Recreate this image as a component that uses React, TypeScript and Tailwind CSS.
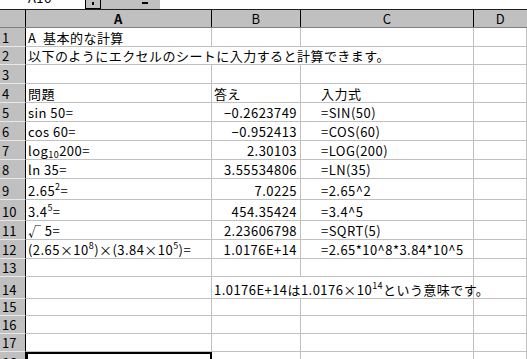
import React from "react";

const FONT = "font-['Noto_Sans_CJK_JP','Noto_Sans_CJK_SC',sans-serif]";
const CELL =
  "flex items-end border-r border-b border-[#c0c0c0] px-[2px] pb-[1px] leading-[15px] whitespace-nowrap";

type Row = {
  n: number;
  h: string;
  a?: React.ReactNode;
  b?: React.ReactNode;
  c?: React.ReactNode;
  span?: "abc" | "bc";
  bLeft?: boolean;
};

const Sup = ({ children }: { children: React.ReactNode }) => (
  <sup className="text-[9px] top-[-6px]">{children}</sup>
);

const rows: Row[] = [
  { n: 1, h: "h-[19px]", a: "A\u00a0 基本的な計算" },
  { n: 2, h: "h-[18px]", a: "以下のようにエクセルのシートに入力すると計算できます。", span: "abc" },
  { n: 3, h: "h-[19px]" },
  { n: 4, h: "h-[19px]", a: "問題", b: "答え", c: "入力式", bLeft: true },
  { n: 5, h: "h-[19px]", a: "sin 50=", b: "−0.2623749", c: "=SIN(50)" },
  { n: 6, h: "h-[19px]", a: "cos 60=", b: "−0.952413", c: "=COS(60)" },
  {
    n: 7,
    h: "h-[19px]",
    a: (
      <span>
        log<sub className="text-[9px] bottom-[-2px]">10</sub>200=
      </span>
    ),
    b: "2.30103",
    c: "=LOG(200)",
  },
  { n: 8, h: "h-[19px]", a: "ln 35=", b: "3.55534806", c: "=LN(35)" },
  {
    n: 9,
    h: "h-[21px]",
    a: (
      <span>
        2.65<Sup>2</Sup>=
      </span>
    ),
    b: "7.0225",
    c: "=2.65^2",
  },
  {
    n: 10,
    h: "h-[21px]",
    a: (
      <span>
        3.4<Sup>5</Sup>=
      </span>
    ),
    b: "454.35424",
    c: "=3.4^5",
  },
  { n: 11, h: "h-[19px]", a: "√ 5=", b: "2.23606798", c: "=SQRT(5)" },
  {
    n: 12,
    h: "h-[19px]",
    a: (
      <span>
        (2.65×10<Sup>8</Sup>)×(3.84×10<Sup>5</Sup>)=
      </span>
    ),
    b: "1.0176E+14",
    c: "=2.65*10^8*3.84*10^5",
  },
  { n: 13, h: "h-[18px]" },
  {
    n: 14,
    h: "h-[22px]",
    span: "bc",
    b: (
      <span>
        1.0176E+14は1.0176×10<Sup>14</Sup>という意味です。
      </span>
    ),
  },
  { n: 15, h: "h-[17px]" },
  { n: 16, h: "h-[18px]" },
  { n: 17, h: "h-[18px]" },
];

function RowHead({ n, bold }: { n: number | string; bold?: boolean }) {
  return (
    <div
      className={`flex w-[26px] shrink-0 items-end border-r border-b border-r-black border-b-[#e8e8e8] bg-[#c0c0c0] pl-[2px] pb-[1px] leading-[15px] tracking-normal ${
        bold ? "font-bold" : ""
      }`}
    >
      {n}
    </div>
  );
}

function SheetRow({ r }: { r: Row }) {
  return (
    <div className={`flex ${r.h}`}>
      <RowHead n={r.n} />
      {r.span === "abc" ? (
        <div className={`${CELL} w-[448px]`}>{r.a}</div>
      ) : (
        <>
          <div className={`${CELL} w-[186px]`}>{r.a}</div>
          {r.span === "bc" ? (
            <div className={`${CELL} w-[262px]`}>{r.b}</div>
          ) : (
            <>
              <div
                className={`${CELL} w-[89px] ${
                  r.bLeft ? "justify-start" : "justify-end pr-[3px]"
                }`}
              >
                {r.b}
              </div>
              <div className={`${CELL} w-[173px] pl-[20px]`}>{r.c}</div>
            </>
          )}
        </>
      )}
      <div className={`${CELL} flex-1`} />
    </div>
  );
}

export default function App() {
  return (
    <div
      className={`h-[359px] w-[527px] overflow-hidden bg-white text-[13px] tracking-[0.45px] text-black ${FONT}`}
    >
      {/* formula bar, cut off at the top */}
      <div className="flex h-[9px] overflow-hidden">
        <div className="w-[85px] pl-[28px] leading-[13px] -mt-[9px]">A16</div>
        <div className="flex w-[16px] justify-center border-x border-b border-black bg-[#c0c0c0]">
          <div className="mt-[2px] h-[3px] w-[2px] bg-black" />
        </div>
        <div className="flex w-[59px] justify-end bg-[#c0c0c0] pr-[12px]">
          <div className="mt-[2px] h-[2px] w-[6px] bg-black" />
        </div>
        <div className="flex-1 bg-white" />
      </div>
      <div className="h-[1px] bg-[#202020]" />

      {/* column headers */}
      <div className="flex h-[18px] border-b border-[#808080] bg-[#c0c0c0] leading-[15px]">
        <div className="w-[26px] border-r border-black" />
        <div className="flex w-[186px] items-end justify-center border-r border-black pb-[1px] font-bold">
          A
        </div>
        <div className="flex w-[89px] items-end justify-center border-r border-black pb-[1px]">
          B
        </div>
        <div className="flex w-[173px] items-end justify-center border-r border-black pb-[1px]">
          C
        </div>
        <div className="flex flex-1 items-end justify-center pb-[1px]">D</div>
      </div>

      {rows.map((r) => (
        <SheetRow key={r.n} r={r} />
      ))}

      {/* row 18 with the active cell */}
      <div className="flex h-[20px]">
        <RowHead n={18} bold />
        <div className="w-[186px] border-2 border-black" />
        <div className={`${CELL} w-[89px]`} />
        <div className={`${CELL} w-[173px]`} />
        <div className={`${CELL} flex-1`} />
      </div>
    </div>
  );
}
